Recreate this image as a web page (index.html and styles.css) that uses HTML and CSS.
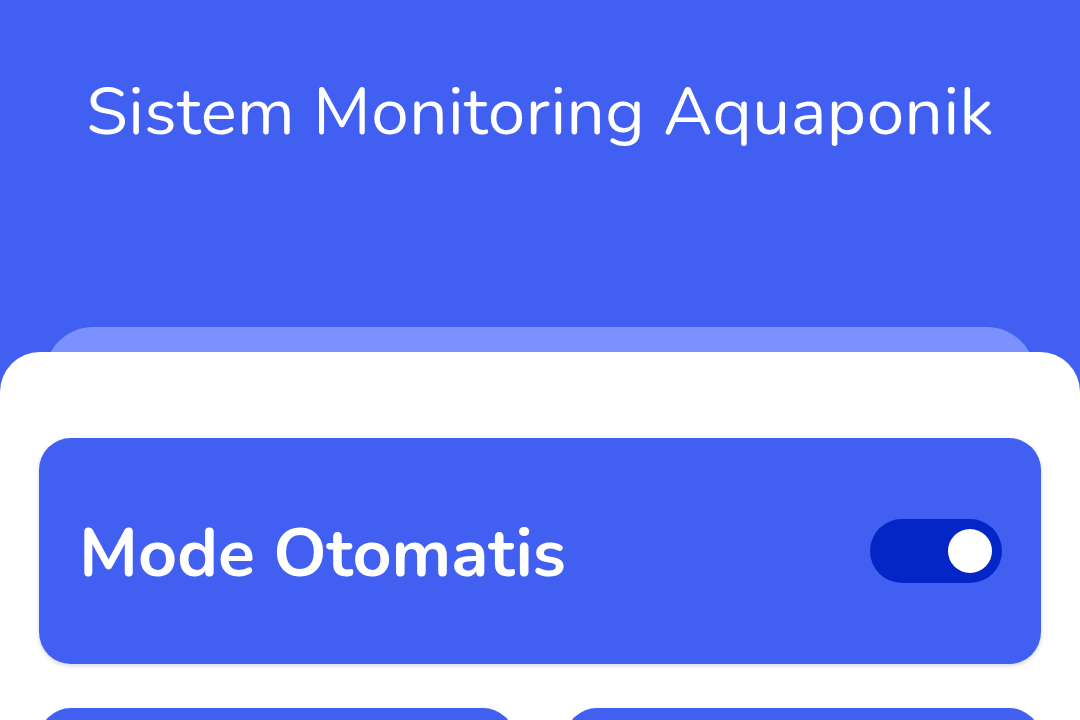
FILE: index.html
```html
<!DOCTYPE html>
<html lang="id">
<head>
<meta charset="utf-8">
<title>Sistem Monitoring Aquaponik</title>
<link rel="stylesheet" href="styles.css">
</head>
<body>
<div class="app">
  <header class="header">
    <h1 class="title">Sistem Monitoring Aquaponik</h1>
  </header>
  <div class="tab-back"></div>
  <main class="sheet">
    <section class="card mode-card">
      <span class="mode-label">Mode Otomatis</span>
      <span class="toggle"><span class="knob"></span></span>
    </section>
    <div class="grid">
      <section class="card small-card"></section>
      <section class="card small-card"></section>
    </div>
  </main>
</div>
</body>
</html>
```

FILE: styles.css
```css
html, body {
  margin: 0;
  padding: 0;
  background: #4160f2;
  overflow: hidden;
}
.app {
  width: 1080px;
  height: 720px;
  overflow: hidden;
  background: #4160f2;
  font-family: "Nunito", "Lato", "Noto Sans", sans-serif;
}
.header {
  height: 327px;
  box-sizing: border-box;
  padding-top: 68px;
  display: flex;
  justify-content: center;
}
.title {
  margin: 0;
  color: #ffffff;
  font-weight: 400;
  font-size: 67.4px;
  line-height: 88px;
  letter-spacing: 0.5px;
}
.tab-back {
  margin: 0 45px;
  height: 70px;
  background: #7b91ff;
  border-radius: 48px 48px 0 0;
}
.sheet {
  margin-top: -45px;
  background: #ffffff;
  border-radius: 40px 40px 0 0;
  padding: 86px 39px 0;
  height: 368px;
  box-sizing: border-box;
  overflow: hidden;
}
.card {
  background: #4160f2;
  border-radius: 32px;
  box-shadow: 0 2px 4px rgba(30, 40, 90, 0.18);
}
.mode-card {
  height: 226px;
  box-sizing: border-box;
  padding: 0 39px 0 40px;
  display: flex;
  align-items: center;
  justify-content: space-between;
}
.mode-label {
  color: #ffffff;
  font-weight: 700;
  font-size: 68px;
  line-height: 1;
  margin-top: 6px;
}
.toggle {
  width: 132px;
  height: 64px;
  border-radius: 32px;
  background: #0526c6;
  display: flex;
  align-items: center;
  justify-content: flex-end;
  padding-right: 10px;
  box-sizing: border-box;
}
.knob {
  width: 44px;
  height: 44px;
  border-radius: 50%;
  background: #ffffff;
}
.grid {
  margin-top: 44px;
  display: grid;
  grid-template-columns: 1fr 1fr;
  gap: 50px;
}
.small-card {
  height: 200px;
}
```
